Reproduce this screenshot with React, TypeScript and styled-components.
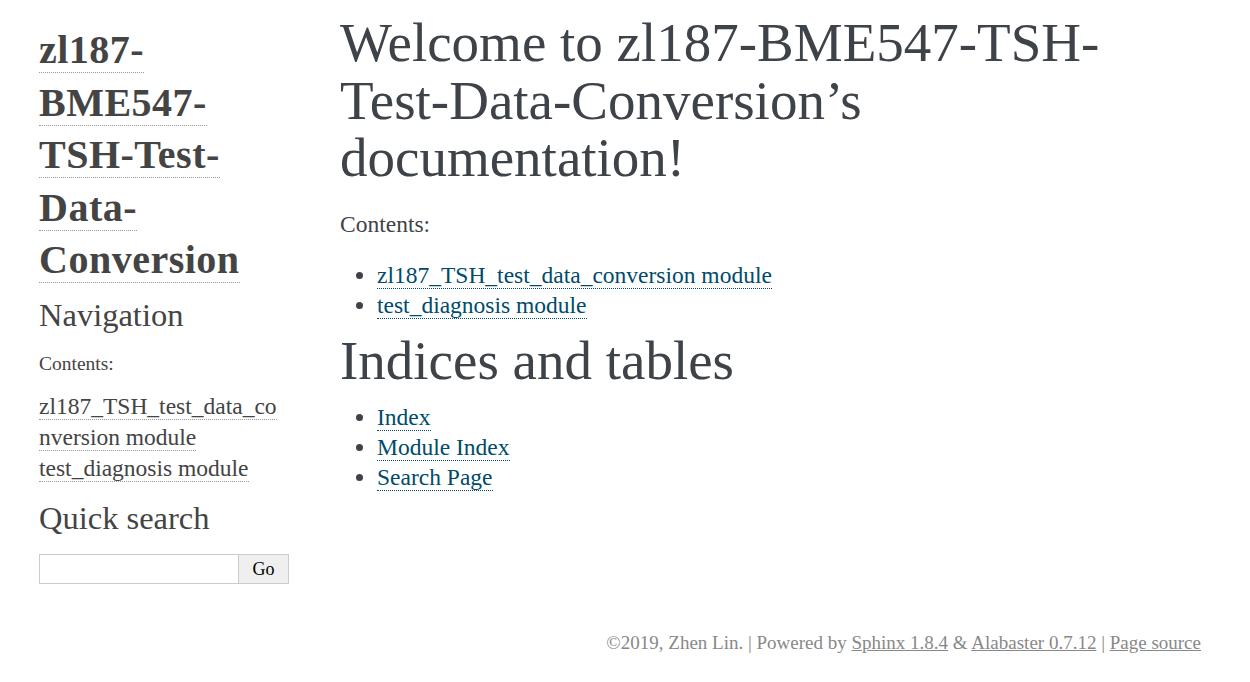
import React from "react";
import styled, { createGlobalStyle } from "styled-components";

const GlobalStyle = createGlobalStyle`
  html, body {
    margin: 0;
    padding: 0;
    background: #ffffff;
  }
  body {
    font-family: "Liberation Serif", "Times New Roman", serif;
    color: #3e4349;
  }
  * { box-sizing: border-box; }
`;

const Page = styled.div`
  width: 1201px;
  padding-left: 39px;
`;

const Document = styled.div`
  display: flex;
  align-items: flex-start;
`;

const Sidebar = styled.aside`
  width: 250px;
  flex: none;
  padding-top: 24.3px;
  color: #444;
`;

const LogoName = styled.h1`
  margin: 0;
  font-size: 40px;
  line-height: 52.5px;
  font-weight: bold;
  letter-spacing: 0.5px;
  color: #444;
`;

const SideLink = styled.a`
  color: #444;
  text-decoration: none;
  border-bottom: 1px dotted #999;
`;

const SideHeading = styled.h3<{ $top: number }>`
  margin: ${(p) => p.$top}px 0 0;
  font-size: 32.5px;
  line-height: 40px;
  font-weight: normal;
  color: #444;
`;

const SideCaption = styled.p`
  margin: 16px 0 0;
  font-size: 19.5px;
  line-height: 26px;
  color: #444;
`;

const SideNav = styled.ul`
  margin: 13.6px 0 0;
  padding: 0;
  list-style: none;
  width: 246px;
`;

const SideNavItem = styled.li`
  font-size: 23.5px;
  line-height: 31px;
  overflow-wrap: anywhere;
`;

const SearchForm = styled.form`
  display: flex;
  margin-top: 16.3px;
  height: 30px;
`;

const SearchInput = styled.input`
  width: 200px;
  height: 30px;
  border: 1px solid #ccc;
  margin: 0;
  padding: 0 4px;
  font-family: "Liberation Serif", serif;
  font-size: 18px;
  background: #fff;
  outline: none;
`;

const SearchButton = styled.button`
  width: 50px;
  height: 30px;
  margin: 0;
  border: 1px solid #ccc;
  border-left: none;
  background: #efefef;
  color: #000;
  font-family: "Liberation Serif", serif;
  font-size: 18px;
  padding: 0;
`;

const Main = styled.main`
  width: 861px;
  margin-left: 51px;
  padding-top: 14.4px;
`;

const Heading = styled.h1<{ $top: number }>`
  margin: ${(p) => p.$top}px 0 0;
  font-size: 55px;
  line-height: 57.5px;
  font-weight: normal;
  color: #3e4349;
`;

const Caption = styled.p`
  margin: 21.9px 0 0;
  font-size: 23.5px;
  line-height: 30px;
  color: #3e4349;
`;

const List = styled.ul<{ $top: number }>`
  margin: ${(p) => p.$top}px 0 0;
  padding-left: 37px;
  list-style: disc;
`;

const ListItem = styled.li`
  font-size: 23.5px;
  line-height: 30px;
  color: #3e4349;
`;

const BodyLink = styled.a`
  color: #004b6b;
  text-decoration: none;
  border-bottom: 1px dotted #004b6b;
`;

const Footer = styled.footer`
  margin-top: 45.7px;
  text-align: right;
  font-size: 19px;
  line-height: 26px;
  color: #888;
`;

const FooterLink = styled.a`
  color: #888;
  text-decoration: underline;
`;

export default function App() {
  return (
    <>
      <GlobalStyle />
      <Page>
        <Document>
          <Sidebar>
            <LogoName>
              <SideLink href="#">zl187-BME547-TSH-Test-Data-Conversion</SideLink>
            </LogoName>
            <SideHeading $top={8.2}>Navigation</SideHeading>
            <SideCaption>Contents:</SideCaption>
            <SideNav>
              <SideNavItem>
                <SideLink href="#">zl187_TSH_test_data_conversion module</SideLink>
              </SideNavItem>
              <SideNavItem>
                <SideLink href="#">test_diagnosis module</SideLink>
              </SideNavItem>
            </SideNav>
            <SideHeading $top={14.4}>Quick search</SideHeading>
            <SearchForm onSubmit={(e) => e.preventDefault()}>
              <SearchInput type="text" />
              <SearchButton type="submit">Go</SearchButton>
            </SearchForm>
          </Sidebar>
          <Main>
            <Heading $top={0}>
              Welcome to zl187-BME547-TSH-Test-Data-Conversion’s documentation!
            </Heading>
            <Caption>Contents:</Caption>
            <List $top={21.6}>
              <ListItem>
                <BodyLink href="#">zl187_TSH_test_data_conversion module</BodyLink>
              </ListItem>
              <ListItem>
                <BodyLink href="#">test_diagnosis module</BodyLink>
              </ListItem>
            </List>
            <Heading $top={11.3}>Indices and tables</Heading>
            <List $top={12.9}>
              <ListItem>
                <BodyLink href="#">Index</BodyLink>
              </ListItem>
              <ListItem>
                <BodyLink href="#">Module Index</BodyLink>
              </ListItem>
              <ListItem>
                <BodyLink href="#">Search Page</BodyLink>
              </ListItem>
            </List>
          </Main>
        </Document>
        <Footer>
          ©2019, Zhen Lin. | Powered by <FooterLink href="#">Sphinx 1.8.4</FooterLink> &amp;{" "}
          <FooterLink href="#">Alabaster 0.7.12</FooterLink> | <FooterLink href="#">Page source</FooterLink>
        </Footer>
      </Page>
    </>
  );
}
